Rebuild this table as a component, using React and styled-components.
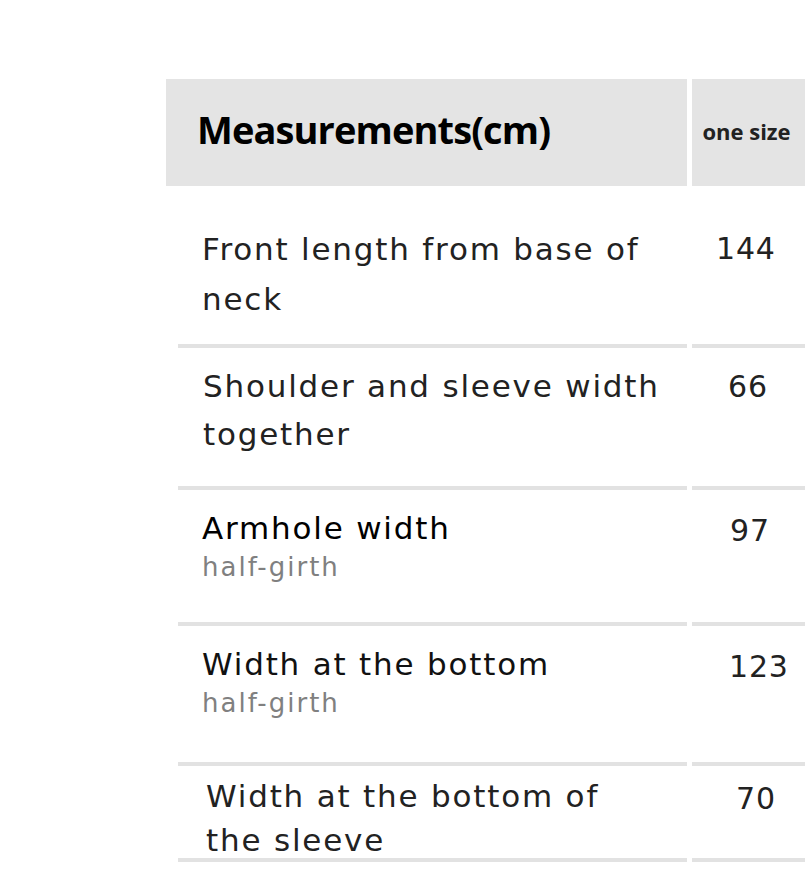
import React from "react";
import styled, { createGlobalStyle } from "styled-components";

const GlobalStyle = createGlobalStyle`
  html, body {
    margin: 0;
    padding: 0;
    background: #ffffff;
  }
  body {
    font-family: "DejaVu Sans", "Noto Sans", sans-serif;
    overflow: hidden;
  }
`;

const Page = styled.div`
  width: 810px;
  height: 869px;
  padding: 79px 0 0 166px;
  box-sizing: border-box;
`;

const Table = styled.div`
  display: grid;
  grid-template-columns: 521px 113px;
  column-gap: 5px;
`;

const HeadCell = styled.div`
  background: #e4e4e4;
  height: 107px;
  display: flex;
  align-items: center;
  justify-content: ${(p) => (p.$center ? "center" : "flex-start")};
  padding-left: ${(p) => (p.$center ? "0" : "31px")};
  font-family: "Open Sans", "Liberation Sans", sans-serif;
  font-weight: 700;
  color: #000;
`;

const HeadTitle = styled.span`
  font-size: 38px;
  letter-spacing: -0.9px;
  margin-top: -8px;
`;

const HeadSize = styled.span`
  font-size: 22px;
  letter-spacing: 0;
  color: #222;
  margin-top: -4px;
  margin-right: 4px;
`;

const NameCell = styled.div`
  margin-left: 12px;
  height: ${(p) => p.$h}px;
  box-sizing: border-box;
  border-bottom: 4px solid #e2e2e2;
  padding: ${(p) => p.$top}px 0 0 ${(p) => p.$indent}px;
`;

const ValueCell = styled.div`
  height: ${(p) => p.$h}px;
  box-sizing: border-box;
  border-bottom: 4px solid #e2e2e2;
  padding-top: ${(p) => p.$top}px;
  padding-left: ${(p) => p.$left}px;
  font-size: 30px;
  line-height: 50px;
  letter-spacing: 0.8px;
  color: #222;
`;

const Line = styled.div`
  font-size: 31px;
  line-height: ${(p) => p.$lh}px;
  color: ${(p) => p.$color};
  white-space: nowrap;
  letter-spacing: 1.8px;
`;

const Note = styled.div`
  font-size: 26px;
  line-height: 34px;
  letter-spacing: 2px;
  color: #808080;
  white-space: nowrap;
`;

const rows = [
  { lines: ["Front length from base of", "neck"], value: "144", h: 162, top: 38, indent: 24, vLeft: 24, lh: 50, color: "#222" },
  { lines: ["Shoulder and sleeve width", "together"], value: "66", h: 142, top: 14, indent: 25, vLeft: 36, lh: 48, color: "#222" },
  { lines: ["Armhole width"], note: "half-girth", value: "97", h: 136, top: 16, indent: 24, vLeft: 38, lh: 44, color: "#000" },
  { lines: ["Width at the bottom"], note: "half-girth", value: "123", h: 140, top: 16, indent: 24, vLeft: 37, lh: 44, color: "#111" },
  { lines: ["Width at the bottom of", "the sleeve"], value: "70", h: 96, top: 8, indent: 28, vLeft: 44, lh: 44, color: "#222" },
];

export default function App() {
  return (
    <>
      <GlobalStyle />
      <Page>
        <Table>
          <HeadCell>
            <HeadTitle>Measurements(cm)</HeadTitle>
          </HeadCell>
          <HeadCell $center>
            <HeadSize>one size</HeadSize>
          </HeadCell>
          {rows.map((r) => (
            <React.Fragment key={r.value}>
              <NameCell $h={r.h} $top={r.top} $indent={r.indent}>
                {r.lines.map((l) => (
                  <Line key={l} $lh={r.lh} $color={r.color}>
                    {l}
                  </Line>
                ))}
                {r.note && <Note>{r.note}</Note>}
              </NameCell>
              <ValueCell $h={r.h} $top={r.top} $left={r.vLeft}>
                {r.value}
              </ValueCell>
            </React.Fragment>
          ))}
        </Table>
      </Page>
    </>
  );
}
